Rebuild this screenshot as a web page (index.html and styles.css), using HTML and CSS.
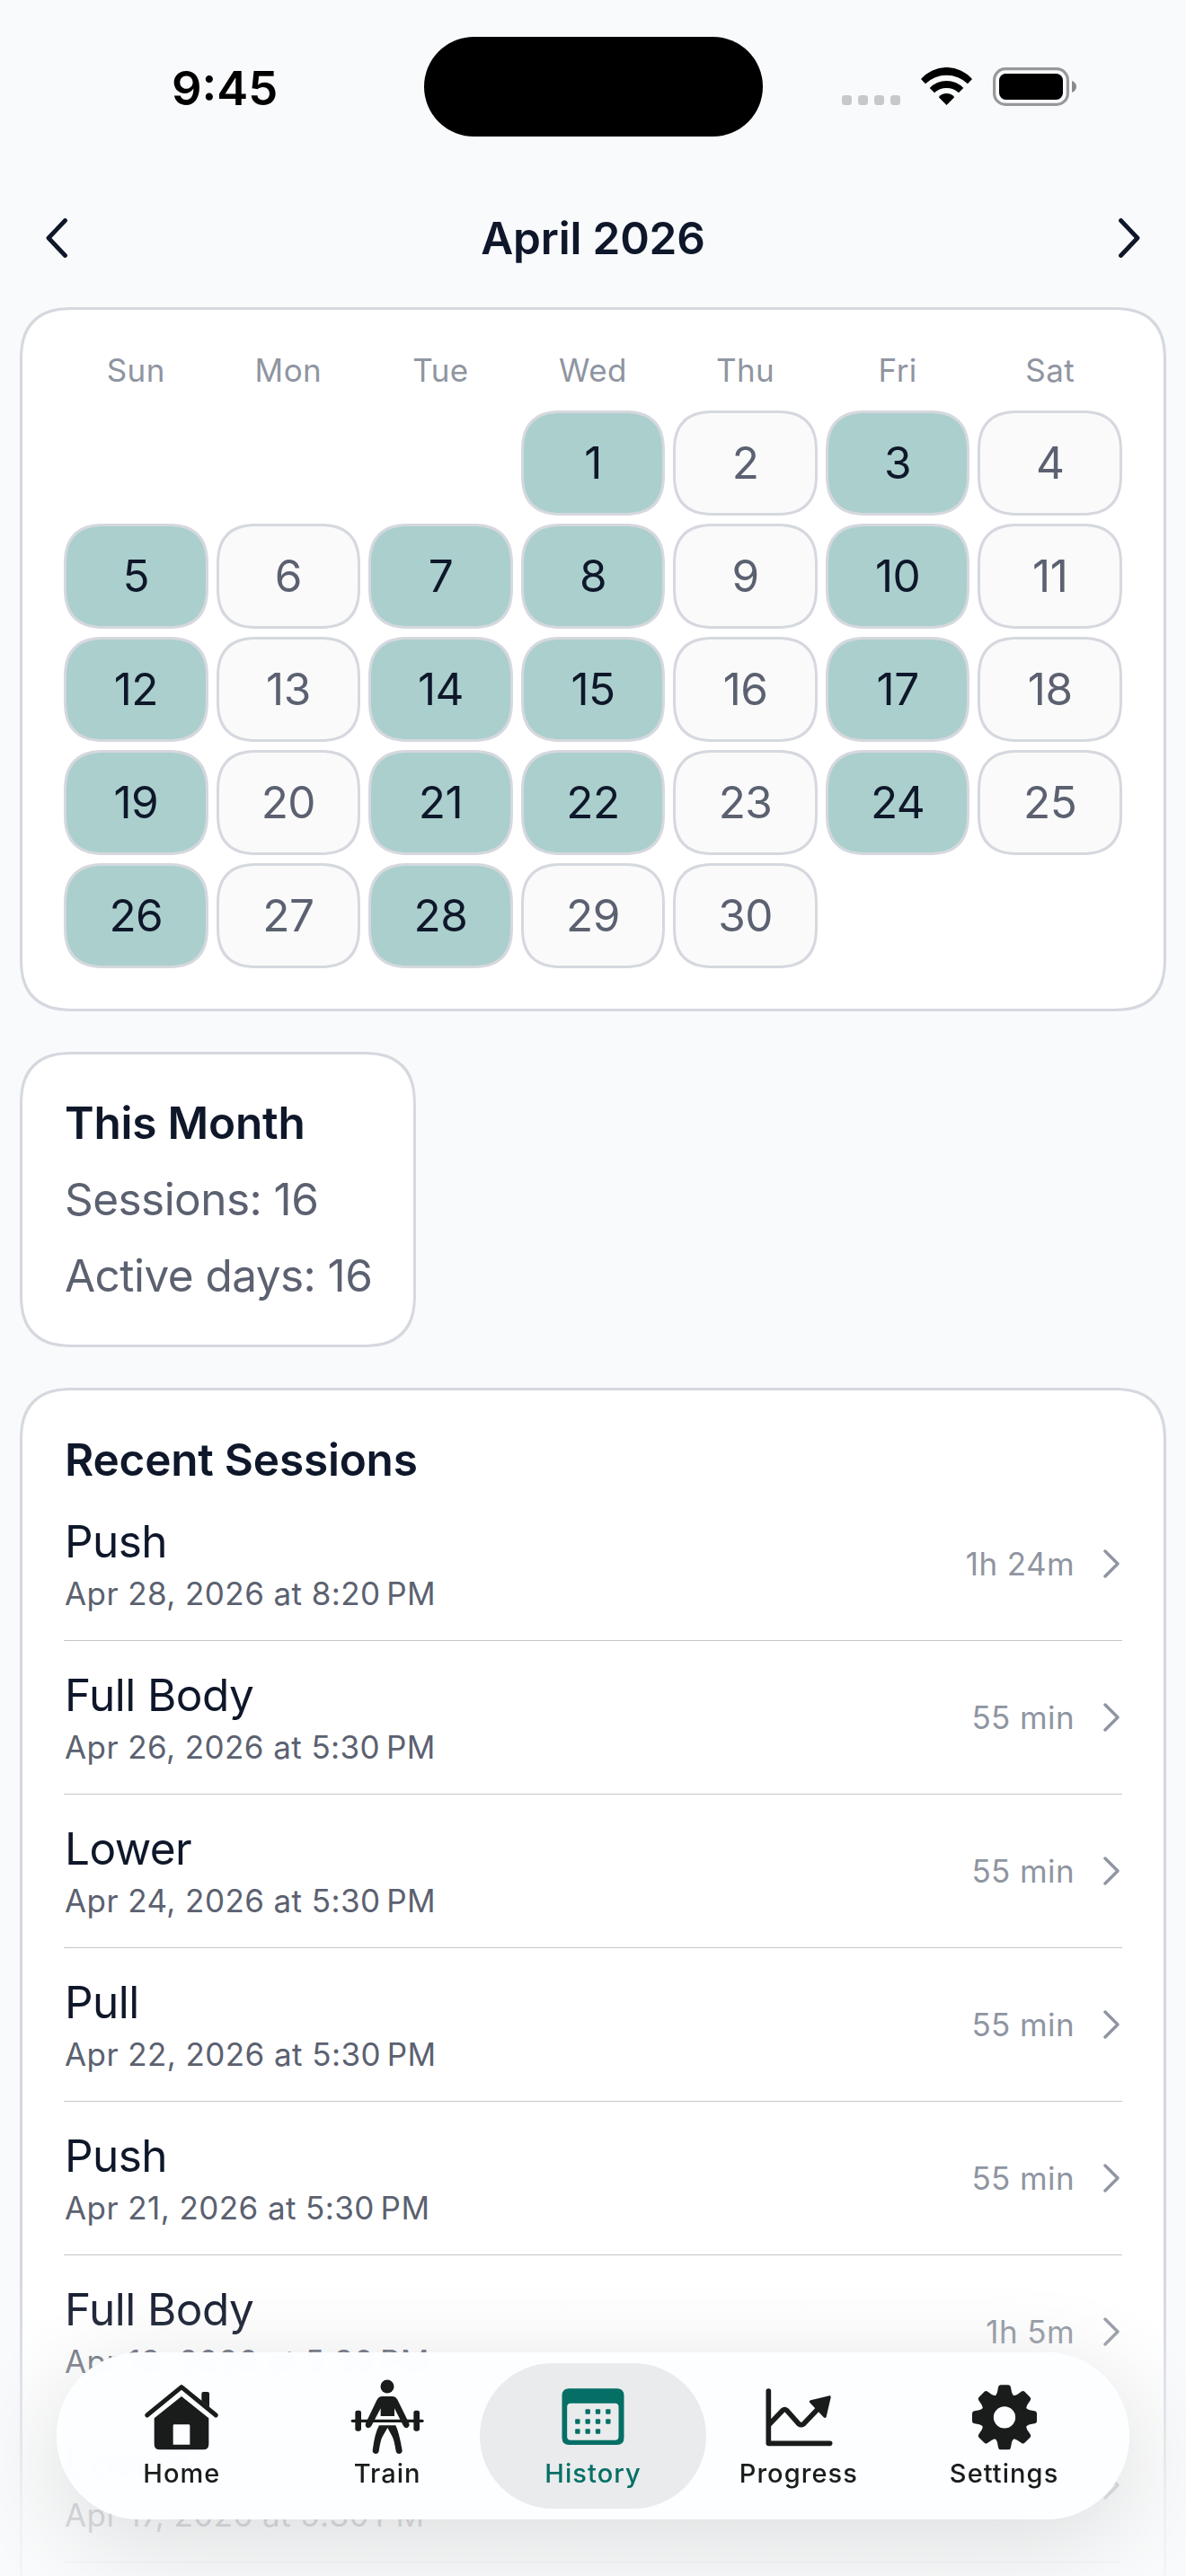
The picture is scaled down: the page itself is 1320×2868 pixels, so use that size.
FILE: index.html
```
<!DOCTYPE html>
<html lang="en">
<head>
  <meta charset="UTF-8">
  <title>History</title>
  <link rel="stylesheet" href="styles.css">
</head>
<body>
  <div class="status-bar">
    <span class="time">9:45</span>
    <div class="island"></div>
    <div class="status-icons">
      <svg width="65" height="43" viewBox="0 0 65 43" fill="#c7c8ca">
        <rect x="0" y="31" width="11" height="11" rx="3.5"/>
        <rect x="18" y="31" width="11" height="11" rx="3.5"/>
        <rect x="36" y="31" width="11" height="11" rx="3.5"/>
        <rect x="54" y="31" width="11" height="11" rx="3.5"/>
      </svg>
      <svg width="57" height="43" viewBox="0 0 57 43">
        <path d="M0 13A37.7 37.7 0 0 1 57 13L52 18.3A34 34 0 0 0 5 18.3Z"/>
        <path d="M9.7 23A26 26 0 0 1 47.3 23L42 28.3A19.8 19.8 0 0 0 15 28.3Z"/>
        <path d="M19.8 33.2A11 11 0 0 1 37.2 33.2L28.5 42Z"/>
      </svg>
      <svg width="93" height="43" viewBox="0 0 93 43">
        <rect x="1.6" y="1.6" width="81.8" height="39.8" rx="12.5" fill="none" stroke="#97989a" stroke-width="3.2"/>
        <rect x="7" y="7" width="71" height="29" rx="7.5"/>
        <path d="M88 15C91 16 93 18.5 93 21.5S91 27 88 28Z" fill="#8a8b8d"/>
      </svg>
    </div>
  </div>

  <header class="month-nav">
    <svg width="24" height="44" viewBox="0 0 24 44"><path d="M21.5 2.5L3 22L21.5 41.5"/></svg>
    <h1>April 2026</h1>
    <svg width="24" height="44" viewBox="0 0 24 44"><path d="M2.5 2.5L21 22L2.5 41.5"/></svg>
  </header>

  <main>
    <section class="card">
      <div class="weekdays">
        <span>Sun</span><span>Mon</span><span>Tue</span><span>Wed</span><span>Thu</span><span>Fri</span><span>Sat</span>
      </div>
      <div class="days">
        <span class="day active first">1</span>
        <span class="day">2</span>
        <span class="day active">3</span>
        <span class="day">4</span>
        <span class="day active">5</span>
        <span class="day">6</span>
        <span class="day active">7</span>
        <span class="day active">8</span>
        <span class="day">9</span>
        <span class="day active">10</span>
        <span class="day">11</span>
        <span class="day active">12</span>
        <span class="day">13</span>
        <span class="day active">14</span>
        <span class="day active">15</span>
        <span class="day">16</span>
        <span class="day active">17</span>
        <span class="day">18</span>
        <span class="day active">19</span>
        <span class="day">20</span>
        <span class="day active">21</span>
        <span class="day active">22</span>
        <span class="day">23</span>
        <span class="day active">24</span>
        <span class="day">25</span>
        <span class="day active">26</span>
        <span class="day">27</span>
        <span class="day active">28</span>
        <span class="day">29</span>
        <span class="day">30</span>
      </div>
    </section>

    <section class="card summary">
      <h2>This Month</h2>
      <p>Sessions: 16</p>
      <p>Active days: 16</p>
    </section>

    <section class="card recent">
      <h2>Recent Sessions</h2>
      <div class="session">
        <div class="info"><div class="name">Push</div><div class="date">Apr 28, 2026 at 8:20&#8239;PM</div></div>
        <span class="duration">1h 24m</span>
        <svg class="chevron" viewBox="0 0 18 32"><path d="M2 2L16 16L2 30"/></svg>
      </div>
      <div class="session">
        <div class="info"><div class="name">Full Body</div><div class="date">Apr 26, 2026 at 5:30&#8239;PM</div></div>
        <span class="duration">55 min</span>
        <svg class="chevron" viewBox="0 0 18 32"><path d="M2 2L16 16L2 30"/></svg>
      </div>
      <div class="session">
        <div class="info"><div class="name">Lower</div><div class="date">Apr 24, 2026 at 5:30&#8239;PM</div></div>
        <span class="duration">55 min</span>
        <svg class="chevron" viewBox="0 0 18 32"><path d="M2 2L16 16L2 30"/></svg>
      </div>
      <div class="session">
        <div class="info"><div class="name">Pull</div><div class="date">Apr 22, 2026 at 5:30&#8239;PM</div></div>
        <span class="duration">55 min</span>
        <svg class="chevron" viewBox="0 0 18 32"><path d="M2 2L16 16L2 30"/></svg>
      </div>
      <div class="session">
        <div class="info"><div class="name">Push</div><div class="date">Apr 21, 2026 at 5:30&#8239;PM</div></div>
        <span class="duration">55 min</span>
        <svg class="chevron" viewBox="0 0 18 32"><path d="M2 2L16 16L2 30"/></svg>
      </div>
      <div class="session">
        <div class="info"><div class="name">Full Body</div><div class="date">Apr 19, 2026 at 5:30&#8239;PM</div></div>
        <span class="duration">1h 5m</span>
        <svg class="chevron" viewBox="0 0 18 32"><path d="M2 2L16 16L2 30"/></svg>
      </div>
      <div class="session">
        <div class="info"><div class="name">Lower</div><div class="date">Apr 17, 2026 at 5:30&#8239;PM</div></div>
        <span class="duration">1h 5m</span>
        <svg class="chevron" viewBox="0 0 18 32"><path d="M2 2L16 16L2 30"/></svg>
      </div>
    </section>
  </main>

  <div class="fade"></div>

  <nav class="tab-bar">
    <a class="tab">
      <svg viewBox="62 80 252 258">
        <path d="M73 206L188 112L303 206" fill="none" stroke="currentColor" stroke-width="15" stroke-linecap="round" stroke-linejoin="round"/>
        <path d="M255 158V134Q255 128 261 128H275Q281 128 281 134V179Z"/>
        <path fill-rule="evenodd" d="M188 143L279 216V303Q279 321 261 321H115Q97 321 97 303V216ZM160 304H216V241Q216 237 212 237H164Q160 237 160 241Z"/>
      </svg>
      <span>Home</span>
    </a>
    <a class="tab">
      <svg viewBox="748 80 252 258">
        <circle cx="874" cy="110" r="22.5"/>
        <path d="M858 143H890Q903 143 909 156L947 233Q950 243 941 248Q932 250 928 242L898 183V209H852V183L821 242Q816 250 807 248Q799 243 802 233L839 156Q845 143 858 143Z"/>
        <rect x="753" y="220" width="243" height="10" rx="5"/>
        <rect x="767" y="190" width="20" height="69" rx="7"/>
        <rect x="962" y="190" width="20" height="69" rx="7"/>
        <path d="M847 240H902Q913 261 924 324Q924 334 914 335Q905 335 903 326Q896 284 890 276L875 248L859 276Q852 286 846 326Q844 335 835 335Q825 334 825 324Q832 266 847 240Z"/>
      </svg>
      <span>Train</span>
    </a>
    <a class="tab selected">
      <svg viewBox="55.5 50 252 258">
        <path fill-rule="evenodd" d="M102 87H261Q285 87 285 111V251Q285 275 261 275H102Q78 275 78 251V111Q78 87 102 87ZM107 136Q95 136 95 148V247Q95 259 107 259H255Q267 259 267 247V148Q267 136 255 136Z"/>
        <g>
          <rect x="156" y="156" width="16" height="16" rx="3"/>
          <rect x="190" y="156" width="16" height="16" rx="3"/>
          <rect x="224" y="156" width="16" height="16" rx="3"/>
          <rect x="122" y="189" width="16" height="16" rx="3"/>
          <rect x="156" y="189" width="16" height="16" rx="3"/>
          <rect x="190" y="189" width="16" height="16" rx="3"/>
          <rect x="224" y="189" width="16" height="16" rx="3"/>
          <rect x="122" y="222" width="16" height="16" rx="3"/>
          <rect x="156" y="222" width="16" height="16" rx="3"/>
          <rect x="190" y="222" width="16" height="16" rx="3"/>
        </g>
      </svg>
      <span>History</span>
    </a>
    <a class="tab">
      <svg viewBox="740 50 252 258">
        <g fill="none" stroke="currentColor" stroke-width="17" stroke-linecap="round" stroke-linejoin="round">
          <path d="M765 95V270H970"/>
          <path d="M768 206L812 160Q819 154 826 160L866 205Q874 211 882 205L938 147"/>
        </g>
        <path d="M968 111Q974 110 973 117L958 181Q955 188 949 183L903 134Q899 128 906 126Z"/>
      </svg>
      <span>Progress</span>
    </a>
    <a class="tab">
      <svg viewBox="-126 -133 252 258">
        <defs>
          <path id="tooth" d="M-34 -68Q-26 -76 -24 -84L-21 -100Q-20 -108 -13 -108H13Q20 -108 21 -100L24 -84Q26 -76 34 -68Z"/>
        </defs>
        <circle r="57.5" fill="none" stroke="currentColor" stroke-width="42"/>
        <use href="#tooth"/>
        <use href="#tooth" transform="rotate(45)"/>
        <use href="#tooth" transform="rotate(90)"/>
        <use href="#tooth" transform="rotate(135)"/>
        <use href="#tooth" transform="rotate(180)"/>
        <use href="#tooth" transform="rotate(225)"/>
        <use href="#tooth" transform="rotate(270)"/>
        <use href="#tooth" transform="rotate(315)"/>
      </svg>
      <span>Settings</span>
    </a>
  </nav>
</body>
</html>
```
FILE: styles.css
```
* { box-sizing: border-box; margin: 0; padding: 0; }
body { position: relative; width: 1320px; height: 2868px; overflow: hidden; background: #f9fafc; color: #0f172a; font-family: Inter, "Liberation Sans", sans-serif; font-size: 49.5px; line-height: 61px; letter-spacing: -0.55px; }
svg { display: block; flex: none; }
h1, h2 { font-size: 49.5px; font-weight: 600; letter-spacing: -0.2px; }

/* status bar */
.status-bar { display: grid; grid-template-columns: 472px 377px 1fr; align-items: center; height: 186px; padding: 41px 0 34px; color: #000; }
.time { padding: 3px 0 0 191px; font-size: 52.5px; font-weight: 600; letter-spacing: 0; }
.island { height: 111px; border-radius: 56px; background: #000; }
.status-icons { display: flex; gap: 23px; padding-left: 88px; }

.month-nav { display: flex; align-items: center; justify-content: space-between; height: 156px; padding: 2px 51px 0; }
.month-nav path { fill: none; stroke: #0f172a; stroke-width: 4.8; stroke-linecap: round; stroke-linejoin: round; }

main { display: flex; flex-direction: column; align-items: flex-start; gap: 45px; height: 2526px; padding: 0 22px; overflow: hidden; }
.card { flex: none; width: 100%; padding: 46px; background: #fff; border: 3px solid #d5d8de; border-radius: 60px; corner-shape: superellipse(1.35); }

/* calendar */
.weekdays { display: grid; grid-template-columns: repeat(7, 1fr); gap: 9px; margin-bottom: 23px; font-size: 35px; line-height: 43px; letter-spacing: 0.4px; text-align: center; color: #8f95a1; }
.days { display: grid; grid-template-columns: repeat(7, 1fr); grid-auto-rows: 117px; gap: 9px; margin-bottom: -1px; }
.day { display: flex; align-items: center; justify-content: center; background: #fafafb; border: 3px solid #d5d8de; border-radius: 46px; corner-shape: superellipse(1.35); color: #5b6170; }
.day.active { background: #abcfcd; color: #0f172a; }
.day.first { grid-column: 4; }

.summary { width: auto; display: flex; flex-direction: column; gap: 24px; padding-left: 47px; color: #5b6170; }
.summary h2 { color: #0f172a; }

/* sessions */
.recent { height: 1500px; padding-top: 47px; }
.recent h2 { padding-left: 1px; }
.session { display: flex; align-items: center; height: 171px; border-bottom: 1px solid #c6c6c8; }
.info { flex: 1; display: flex; flex-direction: column; gap: 5px; padding-left: 1px; }
.info .date { font-size: 35px; line-height: 44px; letter-spacing: 0.42px; color: #5b6170; }
.duration { font-size: 35px; letter-spacing: 0.4px; color: #8f95a1; }
.chevron { width: 18px; height: 32px; margin: 0 3px 0 32px; fill: none; stroke: #8f95a1; stroke-width: 3.4; stroke-linecap: round; stroke-linejoin: round; }

.fade { position: absolute; left: 0; right: 0; bottom: 0; height: 340px; background: linear-gradient(rgba(249, 250, 251, 0), rgba(249, 250, 251, 0.12) 20%, rgba(249, 250, 251, 0.35) 36%, rgba(249, 250, 251, 0.78) 75%, rgba(249, 250, 251, 0.85)); }

/* tab bar */
.tab-bar { position: absolute; left: 63px; right: 63px; bottom: 63px; height: 186px; display: grid; grid-template-columns: repeat(5, 1fr); padding: 12px 25px; border-radius: 93px; background: rgba(253, 254, 255, 0.97); backdrop-filter: blur(4px); box-shadow: 0 24px 110px rgba(0, 0, 0, 0.12); }
.tab { display: flex; flex-direction: column; align-items: center; padding-top: 16px; border-radius: 81px; font-size: 29px; line-height: 36px; font-weight: 500; letter-spacing: 1.05px; color: #1a1c1c; }
.tab svg { width: 84px; height: 86px; margin-bottom: 3px; fill: currentColor; }
.tab.selected { margin: 0 -12px; background: #e9ebec; color: #056f66; }
```
